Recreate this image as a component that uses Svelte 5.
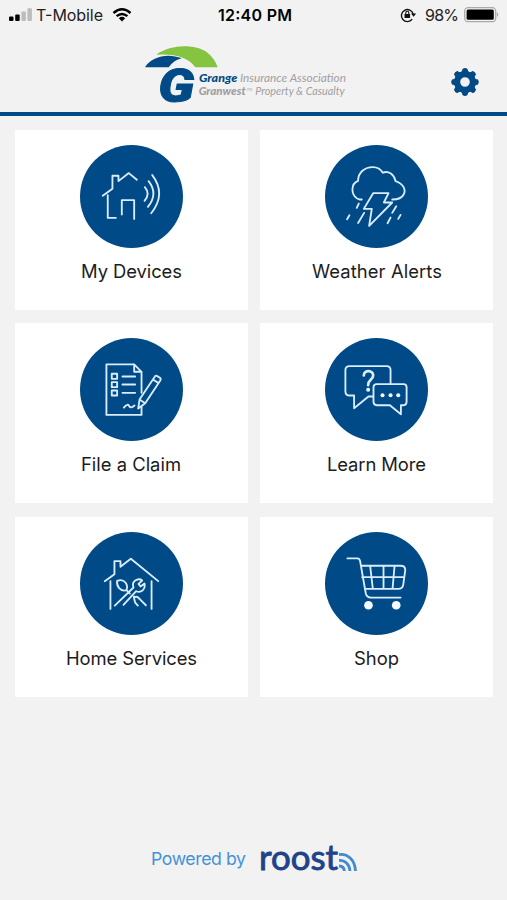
<script lang="ts">
	interface Tile {
		icon: string;
		label: string;
		width: number;
	}

	const tiles: Tile[] = [
		{ icon: 'devices', label: 'My Devices', width: 101 },
		{ icon: 'weather', label: 'Weather Alerts', width: 130 },
		{ icon: 'claim', label: 'File a Claim', width: 100 },
		{ icon: 'learn', label: 'Learn More', width: 99 },
		{ icon: 'services', label: 'Home Services', width: 131 },
		{ icon: 'shop', label: 'Shop', width: 45 }
	];

	const teeth = [0, 45, 90, 135, 180, 225, 270, 315];
</script>

<div class="app">
	<div class="status">
		<svg class="signal" width="24" height="14" viewBox="0 0 24 14">
			<rect x="0" y="8.5" width="4.5" height="4.5" rx="1" />
			<rect x="6.2" y="6.5" width="4.5" height="6.5" rx="1" />
			<rect class="off" x="12.4" y="3.5" width="4.5" height="9.5" rx="1" />
			<rect class="off" x="18.4" y="0.3" width="4.5" height="12.7" rx="1" />
		</svg>
		<svg class="carrier" width="68" height="20">
			<text x="0" y="16" textLength="67">T-Mobile</text>
		</svg>
		<svg class="wifi" width="20" height="14" viewBox="0 0 20 14">
			<path d="M1.5 5Q10-2.6 18.5 5M4.6 8.2Q10 3.7 15.4 8.2" />
			<path class="dot" d="M6.8 10.2Q10 7.5 13.2 10.2L10 13.4z" />
		</svg>
		<svg class="time" width="76" height="20">
			<text x="0" y="16" textLength="74">12:40 PM</text>
		</svg>
		<svg class="lock" width="17" height="16" viewBox="0 0 17 16">
			<path d="M12.2 12.2A6 6 0 1 1 13.2 7" />
			<path class="solid" d="M11 6.5h5.2l-2.6 3.3zM4.5 7h5.6v4H4.5z" />
			<path class="shackle" d="M5.8 7V5.8a1.5 1.5 0 0 1 3 0V7" />
		</svg>
		<svg class="percent" width="35" height="20">
			<text x="0" y="16" textLength="34">98%</text>
		</svg>
		<svg class="battery" width="36" height="16" viewBox="0 0 36 16">
			<rect class="case" x="0.7" y="0.7" width="31" height="14" rx="3.5" />
			<rect x="2.6" y="2.6" width="27.2" height="10.2" rx="1.5" />
			<path class="cap" d="M33 5.2q2.2 2.4 0 4.8z" />
		</svg>
	</div>

	<header>
		<svg class="logo" width="203" height="60" viewBox="30 15 609 180">
			<path fill="#84c441" d="M64 41C108 9 180 9 216 34Q238 51 248 79H181Q151 36 64 41z" />
			<path fill="#004b87" d="M30 79C51 45 100 36 140 52Q117 57 101 79z" />
			<text class="mark" x="70" y="184" textLength="108" lengthAdjust="spacingAndGlyphs">G</text>
			<text class="grange" x="192" y="122" textLength="115" lengthAdjust="spacingAndGlyphs">Grange</text>
			<text class="gray" x="315" y="122" textLength="318" lengthAdjust="spacingAndGlyphs">Insurance Association</text>
			<text class="gray strong" x="191" y="162" textLength="141" lengthAdjust="spacingAndGlyphs">Granwest</text>
			<text class="gray tm" x="335" y="151" textLength="16" lengthAdjust="spacingAndGlyphs">TM</text>
			<text class="gray" x="361" y="162" textLength="268" lengthAdjust="spacingAndGlyphs">Property &amp; Casualty</text>
		</svg>
		<svg class="gear" width="30" height="30" viewBox="-15 -15 30 30">
			<circle r="7.8" />
			{#each teeth as angle}
				<path d="M-4.6-9.5Q-2.8-10-2.5-13Q0-14.8 2.5-13Q2.8-10 4.6-9.5z" transform="rotate({angle})" />
			{/each}
		</svg>
	</header>

	<main>
		{#each tiles as tile}
			<div class="tile">
				<svg class="icon" viewBox="0 0 308 308">
					<circle class="disc" cx="154" cy="154" r="154" />
					{#if tile.icon === 'devices'}
						<path d="M68 152L97 131V92H115V108L146 84L170 104M83 150V218H107M125 208V165H162V221" />
						<path d="M194 126Q211 146 193 167M205 108Q235 146 203 185M216 90Q259 146 213 204" />
					{:else if tile.icon === 'weather'}
						<path d="M110 163H104A29 29 0 0 1 82 134Q82 113 99 107C99 82 119 66 143 66Q163 66 173 83C190 76 207 88 211 108C235 116 243 135 235 148Q228 163 201 163" />
						<path d="M144 144H190L176 172H201L132 242L140 191H116z" />
						<path d="M101 175L95 188M73 210L66 222M117 203L99 233M213 183L201 203M196 217L187 234M226 209L219 221" />
					{:else if tile.icon === 'claim'}
						<path d="M184 164V101L162 79H79V230H184V198M162 79V101H184" />
						<path class="box" d="M95 107h16v15h-16zM95 132h16v15h-16zM95 157h16v15h-16z" />
						<path d="M127 115H165M127 139H165M127 164H165M131 208Q143 193 148 205Q153 211 163 202" />
						<path class="pen" d="M174 211L178 184L224 115Q226 111 231 114L239 119Q243 122 240 127L195 195zM178 184L195 195M218 124L235 135" />
					{:else if tile.icon === 'learn'}
						<path d="M144 175H130L87 210V172H74Q61 172 61 159V96Q61 84 74 84H184Q196 84 196 96V136" />
						<path d="M155 138H235Q244 138 244 147V191Q244 201 235 201H227V228L194 201H155Q145 201 145 191V147Q145 138 155 138z" />
						<path class="question" d="M116 112C117 94 144 96 144 112C144 125 129 124 129 141" />
						<circle class="dot" cx="129" cy="155" r="6" />
						<circle class="dot" cx="172" cy="171" r="6" />
						<circle class="dot" cx="196" cy="171" r="6" />
						<circle class="dot" cx="219" cy="171" r="6" />
					{:else if tile.icon === 'services'}
						<path d="M74 147L103 126V87H121V104L152 80L234 147M91 147V230M214 147V230" />
						<path d="M111 146Q127 140 136 151Q144 162 139 174Q126 178 117 168Q109 158 111 146zM139 174L149 184" />
						<path d="M104 220L160 166Q154 149 169 143Q179 139 186 145L175 155L181 163L193 154Q196 170 184 177Q175 181 168 177L130 218" />
						<path d="M161 193Q162 202 165 211L173 220M163 195Q172 191 178 200L197 219" />
					{:else}
						<path d="M67 79H97Q103 79 105 87L122 184Q125 196 137 196H226M108 101H226Q240 101 240 114L234 157Q232 170 219 170H120M111 135H237M135 101L143 170M175 101V170M208 101L202 170" />
						<circle class="dot" cx="130" cy="219" r="13" />
						<circle class="dot" cx="213" cy="219" r="13" />
					{/if}
				</svg>
				<svg class="label" width={tile.width} height="28">
					<text x="0" y="20" textLength={tile.width}>{tile.label}</text>
				</svg>
			</div>
		{/each}
	</main>

	<footer>
		<svg class="powered" width="96" height="28">
			<text x="0" y="20" textLength="95">Powered by</text>
		</svg>
		<svg class="roost" width="98" height="34" viewBox="0 0 98 34">
			<text x="-1" y="27.3" textLength="79" lengthAdjust="spacingAndGlyphs">roost</text>
			<path d="M79 11.5C88 10.5 95 17 95.5 28M79 17.3C85 17 89.5 21 90 28M79 23Q84 23 84.3 28" />
		</svg>
	</footer>
</div>

<style>
	:global(body) {
		margin: 0;
		background: #f2f2f2;
	}

	.app {
		width: 507px;
		height: 900px;
		display: flex;
		flex-direction: column;
		overflow: hidden;
		background: #f2f2f2;
		font-family: Inter, 'Liberation Sans', sans-serif;
	}

	svg {
		display: block;
		flex: none;
		overflow: visible;
	}

	.status {
		display: flex;
		align-items: center;
		height: 30px;
		padding-left: 9px;
		font-size: 16px;
	}

	.signal .off {
		fill: #bdbdbd;
	}

	.carrier {
		margin-left: 3px;
		fill: #222;
	}

	.wifi {
		margin-left: 8px;
		fill: none;
		stroke: #000;
		stroke-width: 2.4;
	}

	.wifi .dot {
		fill: #000;
		stroke: none;
	}

	.time {
		margin-left: 86px;
		font-weight: 600;
	}

	.lock {
		margin-left: 106px;
		fill: none;
		stroke: #111;
		stroke-width: 1.4;
	}

	.lock .solid {
		fill: #111;
		stroke: none;
	}

	.lock .shackle {
		stroke-width: 1.1;
	}

	.percent {
		margin-left: 8px;
		fill: #222;
	}

	.battery {
		margin-left: 4px;
	}

	.battery .case {
		fill: none;
		stroke: #aaa;
		stroke-width: 1.3;
	}

	.battery .cap {
		fill: #999;
	}

	header {
		box-sizing: border-box;
		display: flex;
		height: 86px;
		padding: 16px 0 0 145px;
		border-bottom: 4px solid #004b87;
	}

	.logo {
		font-family: Lato, sans-serif;
		font-style: italic;
		font-size: 34px;
	}

	.mark {
		font-family: Roboto, sans-serif;
		font-size: 136px;
		font-weight: 900;
		fill: #004b87;
		stroke: #004b87;
		stroke-width: 3;
	}

	.grange {
		font-weight: 900;
		fill: #004b87;
	}

	.gray {
		fill: #a0a0a0;
	}

	.gray.strong {
		font-weight: 900;
	}

	.gray.tm {
		font-size: 12px;
	}

	.gear {
		margin: 21px 0 0 102px;
		fill: #004b87;
	}

	.gear circle {
		fill: none;
		stroke: #004b87;
		stroke-width: 6;
	}

	main {
		display: grid;
		grid-template-columns: 233px 233px;
		grid-auto-rows: 180px;
		gap: 13.4px 12.6px;
		padding: 14px 0 0 14.6px;
	}

	.tile {
		display: flex;
		flex-direction: column;
		align-items: center;
		background: #fff;
	}

	.icon {
		width: 103px;
		height: 103px;
		margin-top: 15px;
		fill: none;
		stroke: #d9edff;
		stroke-width: 5.5;
		stroke-linejoin: round;
		stroke-linecap: round;
	}

	.icon .disc {
		fill: #004b87;
		stroke: none;
	}

	.icon .dot {
		fill: #f4faff;
		stroke: none;
	}

	.icon .question {
		stroke-width: 8;
	}

	.icon .pen {
		fill: #004b87;
	}

	.label {
		margin-top: 10px;
		font-size: 18.4px;
		fill: #1c1c1c;
	}

	footer {
		display: flex;
		align-items: center;
		margin-top: 146px;
		padding-left: 151px;
	}

	.powered {
		margin-top: -2px;
		font-size: 17.7px;
		fill: #4492d8;
	}

	.roost {
		margin-left: 13px;
		font-family: Lato, sans-serif;
		font-size: 35px;
		fill: #1f428a;
	}

	.roost text {
		stroke: #1f428a;
		stroke-width: 0.9;
	}

	.roost path {
		fill: none;
		stroke: #438bc9;
		stroke-width: 2.8;
	}
</style>
